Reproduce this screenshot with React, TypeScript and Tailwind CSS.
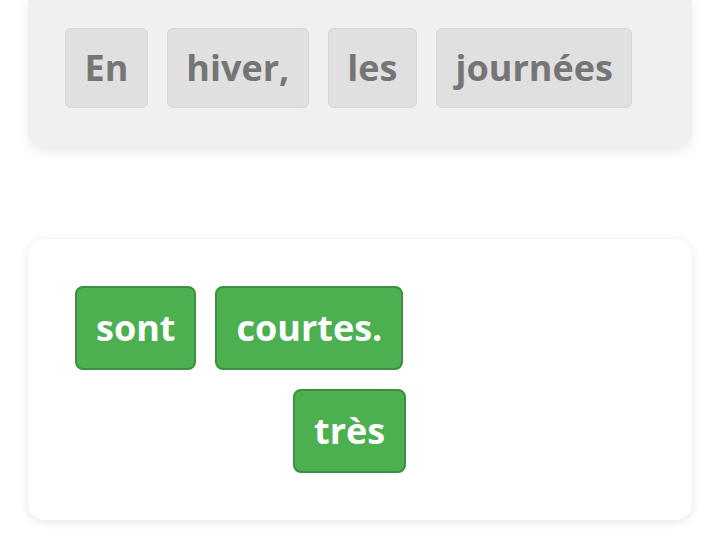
const font = { fontFamily: '"Open Sans", "Noto Sans", sans-serif' };

const sentence = ["En", "hiver,", "les", "journées"];

function PlacedWord({ word }: { word: string }) {
  return (
    <span className="flex h-[80px] items-center rounded-md border border-[#d4d4d4] bg-[#e0e0e0] px-[18.5px] text-[36px] font-bold text-[#757575]">
      {word}
    </span>
  );
}

function BankWord({ word, className = "" }: { word: string; className?: string }) {
  return (
    <span
      className={`flex h-[84px] items-center rounded-lg border-2 border-[#3c8f40] bg-[#4caf50] px-[19px] text-[36px] font-bold text-white ${className}`}
    >
      {word}
    </span>
  );
}

export default function App() {
  return (
    <div className="min-h-[540px] bg-white px-[28px]" style={font}>
      <div className="flex flex-wrap gap-[19px] rounded-b-2xl bg-[#f0f0f0] pt-[28px] pb-[40px] pl-[37px] shadow-[0_4px_12px_rgba(0,0,0,0.08)]">
        {sentence.map((word) => (
          <PlacedWord key={word} word={word} />
        ))}
      </div>

      <div className="mt-[91px] flex flex-col gap-[19px] rounded-2xl bg-white p-[47px] shadow-[0_2px_10px_rgba(0,0,0,0.1)]">
        <div className="flex gap-[19px]">
          <BankWord word="sont" />
          <BankWord word="courtes." />
        </div>
        <div className="flex pl-[218px]">
          <BankWord word="très" />
        </div>
      </div>
    </div>
  );
}
